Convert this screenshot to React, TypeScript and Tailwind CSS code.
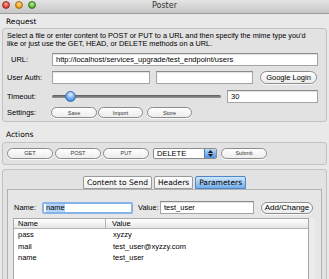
import React from 'react'

const pill =
  'flex items-center justify-center h-[11px] rounded-full border border-[#8c8c8c] bg-gradient-to-b from-white to-[#ececec] text-[5.5px] text-[#333] shadow-[0_1px_0_rgba(255,255,255,0.8)]'

const input =
  'h-[13px] flex items-center bg-white border border-[#a4a4a4] border-t-[#8a8a8a] pl-[3px] text-[7.5px] text-black shadow-[inset_0_1px_1px_rgba(0,0,0,0.12)]'

const Field = ({ w, value, className = '' }: { w: string; value?: string; className?: string }) => (
  <div className={`${input} ${w} ${className}`}>{value}</div>
)

const Tab = ({ label, active }: { label: string; active?: boolean }) => (
  <div
    className={
      active
        ? 'h-[13px] px-[3px] flex items-center border border-[#4f86c8] rounded-t-[2px] bg-gradient-to-b from-[#cfe6fc] to-[#74aeea] text-[7.5px] text-black'
        : 'h-[13px] px-[3px] flex items-center border border-[#9a9a9a] rounded-t-[2px] bg-gradient-to-b from-white to-[#eeeeee] text-[7.5px] text-black'
    }
  >
    {label}
  </div>
)

const rows = [
  ['pass', 'xyzzy'],
  ['mail', 'test_user@xyzzy.com'],
  ['name', 'test_user'],
]

export default function App() {
  return (
    <div className="w-[329px] h-[279px] overflow-hidden bg-[#e9e9e9] font-['Liberation_Sans',Arial,sans-serif] text-black">
      {/* title bar */}
      <div className="relative h-[14px] bg-gradient-to-b from-[#e4e4e4] to-[#c6c6c6] border-b border-[#9c9c9c]">
        <div className="absolute left-[2px] top-[1px] flex gap-[5px]">
          <span className="w-[8px] h-[8px] rounded-full bg-[radial-gradient(circle_at_50%_35%,#ffb0a8,#e0443a_60%,#a8261f)] border border-[#a0302a]" />
          <span className="w-[8px] h-[8px] rounded-full bg-[radial-gradient(circle_at_50%_35%,#ffe0a0,#f0a020_60%,#b87010)] border border-[#a87018]" />
          <span className="w-[8px] h-[8px] rounded-full bg-[radial-gradient(circle_at_50%_35%,#c8f0a0,#5cb83a_60%,#2f7a1c)] border border-[#3a7a24]" />
        </div>
        <div className="text-center leading-[11px] text-[8px] text-[#333] font-['DejaVu_Sans',sans-serif]">
          Poster
        </div>
      </div>

      {/* Request */}
      <div className="h-[14px] pl-[6px] leading-[15px] text-[7.5px] font-['DejaVu_Sans',sans-serif]">Request</div>
      <div className="mx-[2px] h-[94px] border border-[#c2c2c2] rounded-[3px] bg-[#e2e2e2]">
        <div className="pt-[3px] pl-[4px] text-[7.3px] leading-[7.6px]">
          Select a file or enter content to POST or PUT to a URL and then specify the mime type you'd
          <br />
          like or just use the GET, HEAD, or DELETE methods on a URL.
        </div>
        <div className="mt-[6px] flex items-center">
          <div className="w-[49px] pl-[8px] text-[7.5px]">URL:</div>
          <Field w="w-[266px]" value="http://localhost/services_upgrade/test_endpoint/users" />
        </div>
        <div className="mt-[5px] flex items-center">
          <div className="w-[49px] pl-[4px] text-[7.5px]">User Auth:</div>
          <Field w="w-[98px]" />
          <Field w="w-[97px]" className="ml-[6px]" />
          <div className={`${pill} ml-[7px] w-[57px] h-[13px] text-[7.5px] text-black`}>Google Login</div>
        </div>
        <div className="mt-[6px] flex items-center">
          <div className="w-[49px] pl-[4px] text-[7.5px]">Timeout:</div>
          <div className="relative w-[169px] h-[13px] flex items-center">
            <div className="w-full h-[3px] rounded-full bg-gradient-to-b from-[#5a5a5a] to-[#9a9a9a]" />
            <div className="absolute left-[13px] top-[1px] w-[11px] h-[11px] rounded-full border border-[#3a6db0] bg-[radial-gradient(circle_at_50%_30%,#e6f2ff,#6aa8ec_55%,#2f6fc4)]" />
          </div>
          <Field w="w-[91px]" value="30" className="ml-[6px]" />
        </div>
        <div className="mt-[4px] flex items-center">
          <div className="w-[48px] pl-[4px] text-[7.5px]">Settings:</div>
          <div className={`${pill} w-[46px]`}>Save</div>
          <div className={`${pill} w-[45px] ml-[1px]`}>Import</div>
          <div className={`${pill} w-[45px] ml-[4px]`}>Store</div>
        </div>
      </div>

      {/* Actions */}
      <div className="h-[20px] pl-[6px] pt-[9px] leading-[8px] text-[7.5px] font-['DejaVu_Sans',sans-serif]">Actions</div>
      <div className="mx-[2px] h-[23px] border border-[#c2c2c2] rounded-[3px] bg-[#e2e2e2] flex items-center pl-[4px]">
        <div className={`${pill} w-[46px]`}>GET</div>
        <div className={`${pill} w-[46px] ml-[2px]`}>POST</div>
        <div className={`${pill} w-[46px] ml-[2px]`}>PUT</div>
        <div className="ml-[4px] w-[64px] h-[11px] flex items-center border border-[#8c8c8c] rounded-[2px] bg-white overflow-hidden">
          <span className="flex-1 pl-[3px] text-[7.5px] leading-[9px]">DELETE</span>
          <span className="w-[12px] h-full flex flex-col items-center justify-center gap-[1px] bg-gradient-to-b from-[#b8d8f8] to-[#4f94e0] border-l border-[#4a7fc0]">
            <svg width="5" height="3" viewBox="0 0 5 3"><path d="M0 3 L2.5 0 L5 3 Z" fill="#1a1a1a" /></svg>
            <svg width="5" height="3" viewBox="0 0 5 3"><path d="M0 0 L2.5 3 L5 0 Z" fill="#1a1a1a" /></svg>
          </span>
        </div>
        <div className={`${pill} w-[46px] ml-[4px]`}>Submit</div>
      </div>

      {/* Lower tabbed box */}
      <div className="mt-[4px] mx-[2px] h-[200px] border border-[#c2c2c2] rounded-[3px] bg-[#e2e2e2] pt-[6px] px-[4px]">
        <div className="flex justify-center gap-[2px] font-['DejaVu_Sans',sans-serif]">
          <Tab label="Content to Send" />
          <Tab label="Headers" />
          <Tab label="Parameters" active />
        </div>
        <div className="h-[120px] border border-[#b2b2b2] bg-[#e6e6e6] pt-[11px] pl-[5px] pr-[6px]">
          <div className="flex items-center">
            <div className="w-[29px] pl-[1px] text-[7.5px]">Name:</div>
            <div className="w-[91px] h-[12px] flex items-center bg-white border-[2px] border-[#86b4ea] rounded-[2px] pl-[2px]">
              <span className="bg-[#b4d4fa] text-[7.5px] leading-[8px]">name</span>
            </div>
            <div className="ml-[5px] w-[22px] text-[7.5px]">Value:</div>
            <Field w="w-[94px] h-[12px]" value="test_user" />
            <div className={`${pill} ml-[7px] w-[52px] h-[12px] text-[8px] text-black`}>Add/Change</div>
          </div>
          <div className="mt-[4px] flex">
            <div className="w-[302px] h-[80px] bg-white border border-[#a8a8a8]">
              <div className="flex h-[10px] bg-gradient-to-b from-white to-[#e6e6e6] border-b border-[#b4b4b4] text-[7.5px] leading-[10px]">
                <div className="w-[92px] pl-[4px] border-r border-[#b4b4b4]">Name</div>
                <div className="flex-1 pl-[6px]">Value</div>
              </div>
              {rows.map(([n, v]) => (
                <div key={n} className="flex h-[11.5px] items-center text-[7.5px]">
                  <div className="w-[92px] pl-[4px]">{n}</div>
                  <div className="flex-1 pl-[7px]">{v}</div>
                </div>
              ))}
            </div>
            <div className="w-[6px] h-[80px] bg-[#ececec]" />
          </div>
        </div>
      </div>
    </div>
  )
}
